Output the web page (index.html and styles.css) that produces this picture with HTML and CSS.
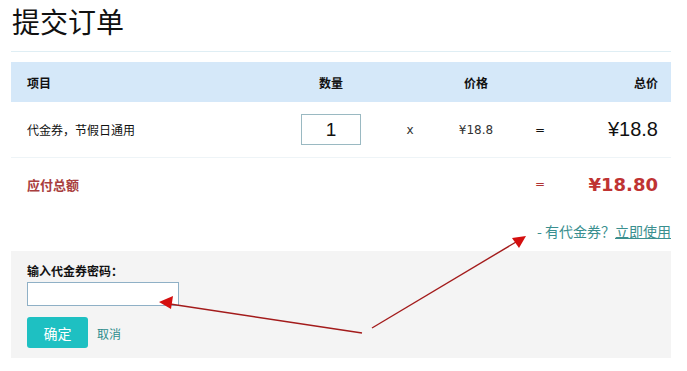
FILE: index.html
```html
<!DOCTYPE html>
<html lang="zh-CN">
<head>
<meta charset="utf-8">
<title>提交订单</title>
<link rel="stylesheet" href="styles.css">
</head>
<body>
<div class="page">
  <h1 class="title">提交订单</h1>
  <div class="order">
    <div class="row head">
      <div class="c-item">项目</div>
      <div class="c-qty">数量</div>
      <div class="c-x"></div>
      <div class="c-price">价格</div>
      <div class="c-eq"></div>
      <div class="c-total">总价</div>
    </div>
    <div class="row item">
      <div class="c-item">代金券，节假日通用</div>
      <div class="c-qty"><input class="qty-input" type="text" value="1"></div>
      <div class="c-x">x</div>
      <div class="c-price num">¥18.8</div>
      <div class="c-eq">=</div>
      <div class="c-total big">¥18.8</div>
    </div>
    <div class="row sum">
      <div class="c-item">应付总额</div>
      <div class="c-qty"></div>
      <div class="c-x"></div>
      <div class="c-price"></div>
      <div class="c-eq">=</div>
      <div class="c-total grand">¥18.80</div>
    </div>
  </div>
  <div class="coupon-link"><span class="dash">- 有代金券？</span><a class="use" href="#">立即使用</a></div>
  <div class="coupon-panel">
    <div class="label">输入代金券密码：</div>
    <input class="code-input" type="text">
    <div class="actions">
      <button class="btn-ok" type="button">确定</button>
      <a class="cancel" href="#">取消</a>
    </div>
  </div>
  <svg class="arrows" width="687" height="371" viewBox="0 0 687 371">
    <line x1="362" y1="333" x2="170" y2="304" stroke="#a31b1b" stroke-width="1.4"/>
    <polygon points="159,302 173,296 171,309" fill="#d40f0f"/>
    <line x1="372" y1="328" x2="516" y2="242" stroke="#a31b1b" stroke-width="1.4"/>
    <polygon points="526,236 519,248 512,238" fill="#d40f0f"/>
  </svg>
</div>
</body>
</html>
```
FILE: styles.css
```css
html, body {
  margin: 0;
  padding: 0;
  background: #ffffff;
}
body {
  font-family: "Noto Sans CJK SC", "DejaVu Sans", sans-serif;
  font-size: 12px;
  color: #111;
}
.page {
  position: relative;
  width: 687px;
  height: 371px;
  padding: 0 16px 0 11px;
  box-sizing: border-box;
}
.title {
  margin: 0;
  padding: 4px 0 0 1px;
  height: 52px;
  box-sizing: border-box;
  font-size: 28px;
  line-height: 34px;
  font-weight: normal;
  border-bottom: 1px solid #dfeef4;
  font-family: "Noto Sans CJK SC", serif;
}
.order {
  margin-top: 10px;
}
.row {
  display: grid;
  grid-template-columns: 274px 60px 98px 34px 94px 1fr;
  align-items: center;
  padding: 0 13px 0 16px;
}
.row > div {
  white-space: nowrap;
}
.head {
  height: 40px;
  background: #d5e8f9;
  font-weight: bold;
  font-size: 12px;
}
.item {
  height: 56px;
  border-bottom: 1px solid #eef4f7;
  box-sizing: border-box;
}
.sum {
  height: 52px;
  color: #b03434;
}
.sum .c-item {
  font-weight: bold;
  font-size: 13px;
  color: #a93e3e;
}
.c-qty, .c-x, .c-price, .c-eq {
  display: flex;
  justify-content: center;
}
.c-total {
  text-align: right;
}
.qty-input {
  width: 60px;
  height: 31px;
  box-sizing: border-box;
  border: 1px solid #9ab9c2;
  text-align: center;
  font-family: "Liberation Sans", sans-serif;
  font-size: 19px;
  padding: 0;
  color: #111;
  outline: none;
}
.c-x {
  font-family: "DejaVu Sans", sans-serif;
  font-size: 12px;
  color: #333;
}
.num {
  font-family: "DejaVu Sans", sans-serif;
  font-size: 12px;
  color: #333;
}
.c-eq {
  font-family: "DejaVu Sans", sans-serif;
  font-size: 12px;
}
.big {
  font-family: "Liberation Sans", sans-serif;
  font-size: 20px;
  color: #111;
}
.grand {
  font-family: "DejaVu Sans", sans-serif;
  font-weight: bold;
  font-size: 18px;
  color: #bf3333;
}
.coupon-link {
  height: 41px;
  display: flex;
  justify-content: flex-end;
  align-items: center;
  font-size: 14px;
  color: #3a8f8f;
  box-sizing: border-box;
}
.coupon-link .use {
  color: #3a8f8f;
  text-decoration: underline;
}
.coupon-panel {
  background: #f4f4f4;
  height: 107px;
  padding: 10px 16px 0;
  box-sizing: border-box;
}
.label {
  font-weight: bold;
  font-size: 12px;
  line-height: 20px;
  color: #111;
}
.code-input {
  display: block;
  width: 152px;
  height: 24px;
  box-sizing: border-box;
  border: 1px solid #8fb0c6;
  background: #fff;
  margin-top: 1px;
  padding: 0;
  outline: none;
}
.actions {
  margin-top: 11px;
  display: flex;
  align-items: center;
  gap: 9px;
}
.btn-ok {
  width: 61px;
  height: 31px;
  border: none;
  border-radius: 3px;
  background: #1ec0c2;
  color: #ffffff;
  font-family: "Noto Sans CJK SC", sans-serif;
  font-size: 14px;
  padding: 0;
}
.cancel {
  color: #2c8c8c;
  text-decoration: none;
  font-size: 12px;
  margin-top: 2px;
}
.arrows {
  position: absolute;
  left: 0;
  top: 0;
  pointer-events: none;
}
```
